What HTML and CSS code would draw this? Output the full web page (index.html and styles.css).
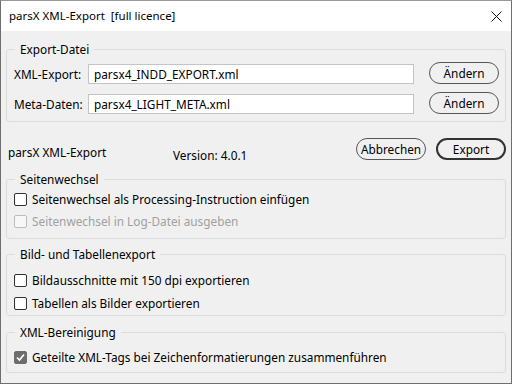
FILE: index.html
```html
<!DOCTYPE html>
<html lang="de">

<head>
    <meta charset="UTF-8">
    <meta name="viewport" content="width=device-width, initial-scale=1.0">
    <title>parsX XML-Export</title>
    <link rel="stylesheet" href="styles.css">
</head>

<body>

    <div class="window">
        <header class="titlebar">
            <span class="title">parsX XML-Export&nbsp; [full licence]</span>
            <svg class="close" width="11" height="11" viewBox="0 0 11 11">
                <path d="M0.5 0.5L10.5 10.5M10.5 0.5L0.5 10.5" stroke="#111" stroke-width="1" fill="none" />
            </svg>
        </header>

        <main class="content">
            <fieldset class="group group-files">
                <legend>Export-Datei</legend>
                <div class="file-row">
                    <label class="file-label">XML-Export:</label>
                    <div class="field">parsx4_INDD_EXPORT.xml</div>
                    <button class="btn">Ändern</button>
                </div>
                <div class="file-row">
                    <label class="file-label">Meta-Daten:</label>
                    <div class="field">parsx4_LIGHT_META.xml</div>
                    <button class="btn">Ändern</button>
                </div>
            </fieldset>

            <div class="actions">
                <span class="app-name">parsX XML-Export</span>
                <span class="version">Version: 4.0.1</span>
                <span class="spacer"></span>
                <button class="btn">Abbrechen</button>
                <button class="btn btn-default">Export</button>
            </div>

            <fieldset class="group group-pages">
                <legend>Seitenwechsel</legend>
                <div class="check"><span class="box"></span>Seitenwechsel als Processing-Instruction einfügen</div>
                <div class="check disabled"><span class="box"></span>Seitenwechsel in Log-Datei ausgeben</div>
            </fieldset>

            <fieldset class="group group-images">
                <legend>Bild- und Tabellenexport</legend>
                <div class="check"><span class="box"></span>Bildausschnitte mit 150 dpi exportieren</div>
                <div class="check"><span class="box"></span>Tabellen als Bilder exportieren</div>
            </fieldset>

            <fieldset class="group group-clean">
                <legend>XML-Bereinigung</legend>
                <div class="check checked"><span class="box"><svg width="9" height="9" viewBox="0 0 9 9">
                            <path d="M1 4.5L3.5 7L8 1.5" stroke="#fff" stroke-width="1.6" fill="none" />
                        </svg></span>Geteilte XML-Tags bei Zeichenformatierungen zusammenführen</div>
            </fieldset>
        </main>
    </div>

</body>

</html>
```

FILE: styles.css
```css
body {
    margin: 0;
    font-family: "Noto Sans", sans-serif;
    font-size: 11.8px;
    line-height: 16px;
    color: #000;
}

.window {
    width: 512px;
    height: 384px;
    box-sizing: border-box;
    border: 1px solid #6e6e6e;
    border-top-color: #9a9a9a;
    display: flex;
    flex-direction: column;
    background-color: #f0f0f0;
}

.titlebar {
    height: 30px;
    flex-shrink: 0;
    display: flex;
    align-items: center;
    padding: 0 9px 0 8px;
    background-color: #fff;
}

.title {
    flex: 1;
    padding-bottom: 1px;
    font-size: 11.5px;
}

.content {
    flex: 1;
    padding: 10px 5px 0 5px;
}

.group {
    margin: 0;
    padding: 0 6px 0 7px;
    border: 1px solid #dcdcdc;
    border-radius: 3px;
}

.group legend {
    padding: 0 5px;
    margin-left: 1px;
}

.group-files {
    padding-top: 5px;
    padding-bottom: 7px;
}

.file-row {
    display: grid;
    grid-template-columns: 74px 1fr 70px;
    column-gap: 0;
    align-items: center;
    height: 22px;
}

.file-row + .file-row {
    margin-top: 8px;
}

.file-row .btn {
    margin-left: 15px;
}

.file-row {
    grid-template-columns: 74px 1fr 85px;
}

.file-label {
    padding-top: 2px;
}

.field {
    height: 20px;
    margin-top: 2px;
    box-sizing: border-box;
    border: 1px solid #c4c4c4;
    background-color: #fff;
    padding: 1px 5px;
    line-height: 16px;
}

.btn {
    height: 22px;
    width: 70px;
    padding: 0;
    box-sizing: border-box;
    font: inherit;
    color: #000;
    background-color: transparent;
    border: 1px solid #555;
    border-radius: 11px;
}

.btn-default {
    border: 2px solid #333;
}

.actions {
    display: flex;
    align-items: flex-start;
    height: 22px;
    margin: 16px 0 11px 0;
    padding: 0 0 0 2px;
    gap: 10px;
}

.app-name {
    width: 155px;
    margin-top: 6px;
}

.version {
    margin-top: 9px;
}

.spacer {
    flex: 1;
}

.group-pages {
    padding-top: 4px;
    height: 68px;
    box-sizing: border-box;
}

.group-pages .check + .check {
    margin-top: 6px;
}

.group-images {
    margin-top: 7px;
    padding-top: 10px;
    padding-bottom: 4px;
}

.group-clean {
    margin-top: 8px;
    padding-top: 9px;
    padding-bottom: 7px;
}

.check {
    display: flex;
    align-items: center;
    gap: 5px;
    height: 16px;
}

.check + .check {
    margin-top: 7px;
}

.box {
    width: 13px;
    height: 13px;
    box-sizing: border-box;
    border: 1px solid #333;
    border-radius: 2px;
    background-color: #fff;
    display: flex;
    align-items: center;
    justify-content: center;
}

.disabled {
    color: #a0a0a0;
}

.disabled .box {
    border-color: #bcbcbc;
    background-color: #f7f7f7;
}

.checked .box {
    border-color: #6d6d6d;
    background-color: #6d6d6d;
}
```
